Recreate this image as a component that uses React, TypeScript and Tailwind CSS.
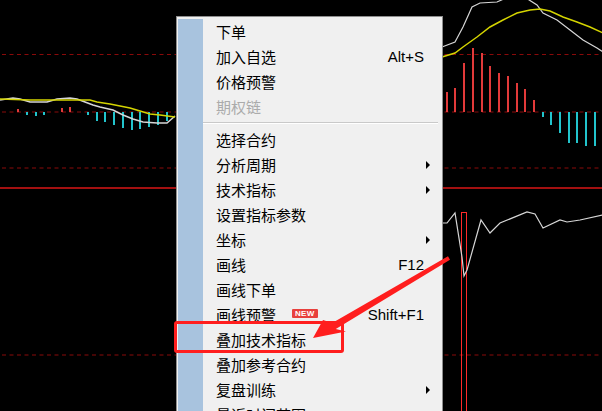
import React from "react";

type Item =
  | { sep: true }
  | { sep?: false; t: string; s?: string; sub?: boolean; disabled?: boolean; badge?: boolean };

const items: Item[] = [
  { t: "下单" },
  { t: "加入自选", s: "Alt+S" },
  { t: "价格预警" },
  { t: "期权链", disabled: true },
  { sep: true },
  { t: "选择合约" },
  { t: "分析周期", sub: true },
  { t: "技术指标", sub: true },
  { t: "设置指标参数" },
  { t: "坐标", sub: true },
  { t: "画线", s: "F12" },
  { t: "画线下单" },
  { t: "画线预警", badge: true, s: "Shift+F1" },
  { t: "叠加技术指标" },
  { t: "叠加参考合约" },
  { t: "复盘训练", sub: true },
  { t: "最近时间范围", sub: true },
];

const pts = (a: number[][]) => a.map((p) => p.join(",")).join(" ");

function Chart() {
  const cyanLeft = [
    [27, 115], [36, 116], [44, 115], [88, 115], [97, 121], [105, 122], [114, 125],
    [123, 128], [132, 130], [140, 129], [149, 127], [158, 125], [167, 121],
  ];
  const redLeft = [[18, 109], [62, 108], [70, 107]];
  const redRight = [
    [447, 92], [455, 88], [464, 63], [473, 48], [482, 53], [490, 66], [499, 73],
    [508, 76], [517, 83], [525, 89], [534, 100],
  ];
  const cyanRight = [[543, 117], [551, 125], [560, 133], [569, 143], [577, 143], [586, 146], [595, 146]];
  const dash = "4 3.5";
  const dr = "#8a0a0a";
  return (
    <svg className="absolute inset-0" width="602" height="411" viewBox="0 0 602 411">
      <line x1="2" y1="54.5" x2="602" y2="54.5" stroke={dr} strokeWidth="1" strokeDasharray={dash} />
      <line x1="2" y1="112" x2="602" y2="112" stroke={dr} strokeWidth="1" strokeDasharray={dash} />
      <line x1="2" y1="168" x2="602" y2="168" stroke={dr} strokeWidth="1" strokeDasharray={dash} />
      <line x1="0" y1="188" x2="602" y2="188" stroke="#a31010" strokeWidth="2" />
      <line x1="2" y1="355" x2="602" y2="355" stroke={dr} strokeWidth="1" strokeDasharray={dash} />
      {cyanLeft.concat(cyanRight).map(([x, y], i) => (
        <line key={"c" + i} x1={x} y1={112} x2={x} y2={y} stroke="#22c4cc" strokeWidth="2" />
      ))}
      {redLeft.concat(redRight).map(([x, y], i) => (
        <line key={"r" + i} x1={x} y1={112} x2={x} y2={y} stroke="#e23a3a" strokeWidth="2" />
      ))}
      <polyline
        fill="none"
        stroke="#d6d6d6"
        strokeWidth="1.5"
        points={pts([
          [0, 100], [13, 98], [20, 99], [30, 102], [47, 102], [57, 99], [70, 98], [77, 99], [85, 102],
          [93, 105], [100, 107], [113, 110], [123, 115], [133, 119], [143, 122], [157, 123], [167, 123], [175, 116],
        ])}
      />
      <polyline
        fill="none"
        stroke="#d4d400"
        strokeWidth="1.5"
        points={pts([
          [0, 99], [30, 100], [50, 100], [90, 100], [97, 102], [110, 104], [120, 106], [130, 108],
          [140, 111], [150, 114], [160, 115], [175, 117],
        ])}
      />
      <polyline
        fill="none"
        stroke="#d6d6d6"
        strokeWidth="1.2"
        points={pts([[442, 47], [455, 42], [463, 27], [472, 7], [480, 3], [497, 2], [506, -2]])}
      />
      <polyline
        fill="none"
        stroke="#d6d6d6"
        strokeWidth="1.2"
        points={pts([[526, -2], [537, 5], [543, 13], [557, 20], [570, 30], [583, 40], [597, 48], [603, 52]])}
      />
      <polyline
        fill="none"
        stroke="#d4d400"
        strokeWidth="1.5"
        points={pts([
          [442, 57], [455, 53], [463, 47], [477, 37], [490, 27], [503, 20], [517, 13], [530, 10],
          [540, 9], [550, 11], [563, 17], [577, 22], [590, 27], [603, 33],
        ])}
      />
      <rect x="461.5" y="212.5" width="5" height="220" fill="none" stroke="#ff2a2a" strokeWidth="1" />
      <polyline
        fill="none"
        stroke="#d6d6d6"
        strokeWidth="1.2"
        points={pts([
          [442, 223], [447, 223], [455, 213], [462, 257], [464, 276], [467, 270], [481, 220], [490, 233],
          [500, 223], [527, 212], [535, 214], [543, 228], [560, 220], [567, 222], [580, 220], [603, 215],
        ])}
      />
    </svg>
  );
}

function Menu() {
  return (
    <div className="absolute left-[176px] top-[16px] w-[267px] h-[420px] border border-[#8e8e8e] bg-[#f0f0f0] pl-[1px] pt-[2px] flex">
      <div className="w-[25px] shrink-0 bg-[#a8c3de]" />
      <div className="flex-1 flex flex-col">
        {items.map((it, i) =>
          it.sep ? (
            <div key={i} className="h-[8px] flex flex-col justify-center pr-[4px]">
              <div className="h-px bg-[#c9c9c9]" />
              <div className="h-px bg-white" />
            </div>
          ) : (
            <div key={i} className="h-[25px] shrink-0 flex items-center pl-[13px]">
              <span
                className={
                  "font-['Noto_Sans_CJK_SC',sans-serif] text-[15px] leading-[25px] " +
                  (it.disabled ? "text-[#ababab]" : "text-black")
                }
              >
                {it.t}
              </span>
              {it.badge && (
                <span className="ml-[16px] mb-[2px] h-[9px] px-[3px] rounded-[1px] bg-[#e8403d] text-white font-['Liberation_Sans',Arial,sans-serif] font-bold text-[8px] leading-[9px] tracking-[0.3px]">
                  NEW
                </span>
              )}
              <span className="flex-1" />
              {it.s && (
                <span className="font-['Liberation_Sans',Arial,sans-serif] text-[15px] leading-[25px] text-black">
                  {it.s}
                </span>
              )}
              <span className="w-[18px] shrink-0 flex items-center pl-[2px]">
                {it.sub && (
                  <span className="w-0 h-0 border-y-[4px] border-y-transparent border-l-[4px] border-l-black" />
                )}
              </span>
            </div>
          )
        )}
      </div>
    </div>
  );
}

function Annotation() {
  return (
    <>
      <div className="absolute left-[174px] top-[321px] w-[170px] h-[32px] border-[3px] border-[#ff1e1e] rounded-[3px]" />
      <svg className="absolute inset-0 pointer-events-none" width="602" height="411" viewBox="0 0 602 411">
        <polygon
          fill="#ff1e1e"
          points="313,338 323,320 332.2,322.9 448,256.3 450,259.7 335.8,329.1 346,331.5"
        />
      </svg>
    </>
  );
}

export default function App() {
  return (
    <div className="relative w-[602px] h-[411px] bg-black overflow-hidden">
      <Chart />
      <Menu />
      <Annotation />
    </div>
  );
}
